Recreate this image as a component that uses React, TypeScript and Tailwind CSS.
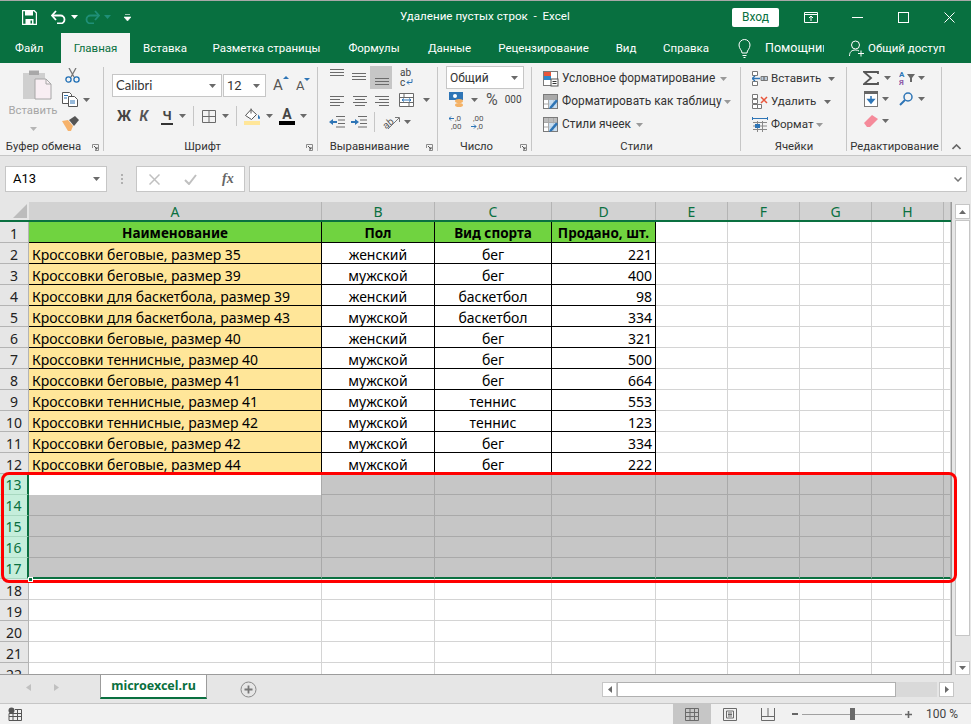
import type { ReactNode } from "react";

const rows = [
  ["Кроссовки беговые, размер 35", "женский", "бег", "221"],
  ["Кроссовки беговые, размер 39", "мужской", "бег", "400"],
  ["Кроссовки для баскетбола, размер 39", "женский", "баскетбол", "98"],
  ["Кроссовки для баскетбола, размер 43", "мужской", "баскетбол", "334"],
  ["Кроссовки беговые, размер 40", "женский", "бег", "321"],
  ["Кроссовки теннисные, размер 40", "мужской", "бег", "500"],
  ["Кроссовки беговые, размер 41", "мужской", "бег", "664"],
  ["Кроссовки теннисные, размер 41", "мужской", "теннис", "553"],
  ["Кроссовки теннисные, размер 42", "мужской", "теннис", "123"],
  ["Кроссовки беговые, размер 42", "мужской", "бег", "334"],
  ["Кроссовки беговые, размер 44", "мужской", "бег", "222"],
];

const columns = [
  { name: "A", width: "w-[293px]" },
  { name: "B", width: "w-[113px]" },
  { name: "C", width: "w-[117px]" },
  { name: "D", width: "w-[104px]" },
  { name: "E", width: "w-[72px]" },
  { name: "F", width: "w-[72px]" },
  { name: "G", width: "w-[72px]" },
  { name: "H", width: "w-[72px]" },
  { name: "", width: "w-[7px]" },
];

const tabs = [
  { name: "Вставка", width: "w-[70px]" },
  { name: "Разметка страницы", width: "w-[133px]" },
  { name: "Формулы", width: "w-[82px]" },
  { name: "Данные", width: "w-[69px]" },
  { name: "Рецензирование", width: "w-[119px]" },
  { name: "Вид", width: "w-[46px]" },
  { name: "Справка", width: "w-[74px]" },
];

const ui = { fontFamily: "Roboto, 'Noto Sans', sans-serif" };

function Chev({ color = "#6a6a6a" }: { color?: string }) {
  return (
    <svg width="7" height="4" viewBox="0 0 7 4" className="shrink-0">
      <path d="M0 0h7L3.5 4z" fill={color} />
    </svg>
  );
}

function Lines({ ys, xs, h = 13 }: { ys: number[]; xs: [number, number][]; h?: number }) {
  return (
    <svg width="15" height={h} viewBox={`0 0 15 ${h}`} className="shrink-0">
      {ys.map((y, i) => (
        <path key={y} d={`M${xs[i][0]} ${y + 0.5}H${xs[i][1]}`} stroke="#6b6b6b" />
      ))}
    </svg>
  );
}

function Launcher() {
  return (
    <svg width="7" height="7" viewBox="0 0 7 7" className="absolute right-[5px] top-[5px]">
      <path d="M.5 4V.5H6.5V6.5H3" fill="none" stroke="#8a8a8a" />
      <path d="M2 2l3 3M5 3v2H3" fill="none" stroke="#555" />
    </svg>
  );
}

function Group({ label, width, children, launcher }: { label: string; width: string; children: ReactNode; launcher?: boolean }) {
  return (
    <div className={`${width} relative flex h-[92px] shrink-0 flex-col`}>
      <div className="h-[76px] shrink-0">{children}</div>
      <div className={`relative h-[16px] whitespace-nowrap text-center text-[11.3px] leading-[16px] text-[#333] ${launcher ? "pr-[17px]" : ""}`}>
        {label}
        {launcher && <Launcher />}
      </div>
      <div className="absolute right-0 top-[4px] h-[84px] w-px bg-[#c6c6c6]" />
    </div>
  );
}

function SheetRow({ n, selected, children }: { n: number; selected?: boolean; children: ReactNode }) {
  return (
    <div className="flex h-[21px] shrink-0">
      <div
        className={
          selected
            ? "w-[29px] shrink-0 border-r-2 border-b border-r-[#0a7040] border-b-[#a8d8c0] bg-[#c5eedb] pt-[1px] text-center text-[14px] leading-[20px] text-[#0a7040]"
            : "w-[29px] shrink-0 border-r border-b border-[#b4b4b4] bg-[#e6e6e6] pt-[3px] text-center text-[14px] leading-[17px] text-[#222]"
        }
      >
        {n}
      </div>
      {children}
    </div>
  );
}

function StyleIcon({ kind }: { kind: number }) {
  return (
    <svg width="16" height="16" viewBox="0 0 16 16" className="shrink-0">
      <rect x=".5" y=".5" width="14" height="14" fill="#fff" stroke="#7a7a7a" />
      {kind === 0 ? (
        <>
          <rect x="1" y="1" width="7" height="4" fill="#e8553a" />
          <rect x="1" y="5" width="7" height="4" fill="#2e86c9" />
          <rect x="8" y="8" width="7" height="7" fill="#fff" stroke="#555" />
          <path d="M9.5 10.5h4M9.5 12.5h4" stroke="#333" />
        </>
      ) : (
        <>
          <rect x="1" y="1" width="13" height="4" fill={kind === 1 ? "#a9a9a9" : "#bcbcbc"} />
          <path d="M5.5 1v13M10.5 1v13M1 5.5h13M1 10h13" stroke="#a9a9a9" />
          <rect x="6" y="6" width="8" height="8" fill="#bdd7ee" opacity=".8" />
          <path d="M6 15l3-1 6-7-2-1.5-6 7z" fill="#2e75b6" />
        </>
      )}
    </svg>
  );
}

function Blank() {
  return (
    <>
      {["w-[72px]", "w-[72px]", "w-[72px]", "w-[72px]", "w-[7px]"].map((w, i) => (
        <div key={i} className={`${w} shrink-0 border-r border-b border-[#d4d4d4]`} />
      ))}
    </>
  );
}

export default function App() {
  const font = { fontFamily: "'Noto Sans', 'Open Sans', sans-serif" };

  return (
    <div className="flex h-[724px] w-[971px] flex-col overflow-hidden bg-[#e6e6e6]" style={font}>
      {/* title bar */}
      <div className="flex h-[33px] shrink-0 items-center border-t border-[#a8a8a8] bg-[#087040] pl-[22px] text-white" style={ui}>
        <svg width="15" height="15" viewBox="0 0 15 15" className="shrink-0">
          <path d="M.5.5h11.5l2.5 2.5v11.5H.5z" fill="none" stroke="#fff" strokeWidth="1.4" />
          <path d="M3 1h8v4.5H3zM3.5 9h8v5.5h-8z" fill="#fff" />
          <path d="M8.5 10.5h1.5v3H8.5z" fill="#087040" />
        </svg>
        <svg width="15" height="14" viewBox="0 0 15 14" className="ml-[14px] shrink-0">
          <path d="M1 5.5h8.5a4 4 0 0 1 0 8H6" fill="none" stroke="#fff" strokeWidth="1.8" />
          <path d="M5 1L1 5.5 5 10" fill="none" stroke="#fff" strokeWidth="1.8" />
        </svg>
        <span className="ml-[5px]"><Chev color="#fff" /></span>
        <svg width="15" height="14" viewBox="0 0 15 14" className="ml-[7px] shrink-0">
          <path d="M14 5.5H5.5a4 4 0 0 0 0 8H9" fill="none" stroke="#1f8f77" strokeWidth="1.8" />
          <path d="M10 1l4 4.5L10 10" fill="none" stroke="#1f8f77" strokeWidth="1.8" />
        </svg>
        <span className="ml-[4px]"><Chev color="#1f8f77" /></span>
        <svg width="7" height="7" viewBox="0 0 7 7" className="ml-[13px] shrink-0">
          <path d="M1 .5h5M0 3h7L3.5 7z" fill="#fff" stroke="#fff" strokeWidth=".6" />
        </svg>
        <span className="ml-[269px] w-[172px] whitespace-pre text-[11.6px]">Удаление пустых строк  -  Excel</span>
        <button className="ml-[160px] h-[19px] w-[47px] rounded-[2px] bg-white text-[12px] leading-[19px] text-[#087040]">Вход</button>
        <svg width="14" height="11" viewBox="0 0 14 11" className="ml-[25px] shrink-0">
          <path d="M.5.5h13v10H.5zM.5 2.5h13M7 9V4.5M5 6l2-2 2 2" fill="none" stroke="#fff" />
        </svg>
        <div className="ml-[34px] h-px w-[11px] shrink-0 bg-white" />
        <div className="ml-[35px] h-[11px] w-[11px] shrink-0 border border-white" />
        <svg width="11" height="11" viewBox="0 0 11 11" className="ml-[35px] shrink-0">
          <path d="M.5.5l10 10M10.5.5l-10 10" stroke="#fff" />
        </svg>
      </div>

      {/* tabs */}
      <div className="flex h-[30px] shrink-0 items-stretch bg-[#087040] text-[11.5px] leading-[30px] text-white" style={ui}>
        <span className="w-[61px] shrink-0 pl-[15px]">Файл</span>
        <span className="w-[69px] shrink-0 bg-[#f3f3f3] text-center text-[#087040]">Главная</span>
        {tabs.map((tab) => (
          <span key={tab.name} className={`${tab.width} shrink-0 whitespace-nowrap text-center`}>{tab.name}</span>
        ))}
        <svg width="13" height="20" viewBox="0 0 13 20" className="ml-[15px] mt-[6px] shrink-0">
          <path d="M4 14c0-3-3-4-3-8a5.5 5.5 0 0 1 11 0c0 4-3 5-3 8zM4.500 16.500h4M5.500 18.500h2" fill="none" stroke="#fff" />
        </svg>
        <span className="ml-[14px] w-[59px] shrink-0 overflow-hidden whitespace-nowrap text-[12.5px]">Помощник</span>
        <svg width="15" height="17" viewBox="0 0 15 17" className="ml-[25px] mt-[7px] shrink-0">
          <circle cx="6.5" cy="5" r="4" fill="none" stroke="#fff" />
          <path d="M.5 16c0-4 2-6 6-6 1.500 0 2.500.3 3.500 1M9 13.500h6M12 10.500v6" fill="none" stroke="#fff" />
        </svg>
        <span className="ml-[4px] whitespace-nowrap">Общий доступ</span>
      </div>

      {/* ribbon */}
      <div className="flex h-[93px] shrink-0 border-b border-[#c6c6c6] bg-[#f3f3f3] text-[#333]" style={ui}>
        <Group label="Буфер обмена" width="w-[104px]" launcher>
          <div className="flex">
            <div className="flex w-[62px] shrink-0 flex-col items-center pl-[4px] pt-[6px]">
              <svg width="29" height="31" viewBox="0 0 29 31" className="ml-[8px]">
                <path d="M0 4h6V1h10v3h6v26H0z" fill="#cfcfcf" />
                <rect x="6" y="2" width="10" height="4" fill="#a8a8a8" />
                <path d="M12 10h11l5 5v15H12z" fill="#f8eef3" stroke="#a6a6a6" />
                <path d="M23 10v5h5" fill="none" stroke="#a6a6a6" />
              </svg>
              <span className="mt-[3px] text-[11.3px] leading-[16px] text-[#a6a6a6]">Вставить</span>
              <span className="mt-[8px]"><Chev color="#b5b5b5" /></span>
            </div>
            <div className="flex flex-col gap-[9px] pt-[5px]">
              <svg width="15" height="15" viewBox="0 0 15 15" className="ml-[3px]">
                <path d="M4 0l5 9M11 0L6 9" stroke="#777" strokeWidth="1.3" />
                <circle cx="3.500" cy="11.500" r="2.600" fill="none" stroke="#1f6fb5" strokeWidth="1.300" />
                <circle cx="11.500" cy="11.500" r="2.600" fill="none" stroke="#1f6fb5" strokeWidth="1.300" />
              </svg>
              <div className="flex items-center gap-[5px]">
                <svg width="16" height="15" viewBox="0 0 16 15">
                  <path d="M.5.5h7l2 2v9H.5z" fill="#fff" stroke="#555" />
                  <path d="M6.500 4.500h6l3 3v7h-9z" fill="#fff" stroke="#555" />
                  <path d="M2 3.500h4M2 6h3M8 9h5M8 11h5" stroke="#2e75b6" />
                </svg>
                <Chev />
              </div>
              <svg width="17" height="15" viewBox="0 0 17 15">
                <path d="M0 5l6-1 5 6-2 5H6z" fill="#f6b26b" />
                <path d="M7 4l6-4 4 4-5 6z" fill="#555" />
              </svg>
            </div>
          </div>
        </Group>

        <Group label="Шрифт" width="w-[214px]" launcher>
          <div className="mt-[11px] flex h-[23px] items-center pl-[8px]">
            <div className="flex h-[23px] w-[110px] items-center justify-between border border-[#c6c6c6] bg-white pl-[3px] pr-[5px] text-[13px]" style={{ fontFamily: "Lato, 'Noto Sans', sans-serif" }}>
              Calibri <Chev />
            </div>
            <div className="ml-px flex h-[23px] w-[43px] items-center justify-between border border-[#c6c6c6] bg-white pl-[3px] pr-[5px] text-[13px]">
              12 <Chev />
            </div>
            <span className="relative ml-[7px] w-[20px] text-[15px] text-[#555]">A<span className="absolute left-[10px] top-[2px]"><svg width="6" height="3"><path d="M0 3l3-3 3 3z" fill="#2e75b6" /></svg></span></span>
            <span className="relative ml-[3px] w-[20px] text-[13px] text-[#555]">A<span className="absolute left-[8px] top-[2px]"><svg width="6" height="3"><path d="M0 0l3 3 3-3z" fill="#2e75b6" /></svg></span></span>
          </div>
          <div className="mt-[7px] flex h-[24px] items-center pl-[13px] text-[14px] font-bold text-[#444]">
            <span className="w-[14px] text-center leading-none">Ж</span>
            <span className="ml-[7px] w-[12px] text-center italic leading-none text-[#555]">К</span>
            <span className="ml-[11px] w-[12px] border-b-2 border-[#333] text-center text-[13px] leading-[15px]">Ч</span>
            <span className="ml-[6px]"><Chev /></span>
            <div className="ml-[7px] h-[20px] w-px bg-[#c6c6c6]" />
            <svg width="14" height="13" viewBox="0 0 14 13" className="ml-[8px]">
              <path d="M.5.5h13v12H.5zM7 .5v12M.5 6.500h13" fill="none" stroke="#6a6a6a" />
            </svg>
            <span className="ml-[6px]"><Chev /></span>
            <div className="ml-[7px] h-[20px] w-px bg-[#c6c6c6]" />
            <svg width="17" height="17" viewBox="0 0 17 17" className="ml-[7px]">
              <path d="M1.500 7.500L7 1.500l5.500 5-5 5z" fill="#fff" stroke="#555" />
              <path d="M7 .5v5" stroke="#555" />
              <path d="M14 6.500c1.200 1.300 2 2.500 2 3.500a1 1 0 0 1-2 0z" fill="#2e75b6" />
              <rect x="0" y="13" width="16" height="4" fill="#ffe699" />
            </svg>
            <span className="ml-[5px]"><Chev /></span>
            <div className="ml-[6px] flex w-[16px] flex-col items-center">
              <span className="text-[14px] leading-[13px] text-[#444]">A</span>
              <span className="h-[4px] w-[16px] bg-black" />
            </div>
            <span className="ml-[5px]"><Chev /></span>
          </div>
        </Group>

        <Group label="Выравнивание" width="w-[120px]" launcher>
          <div className="mt-[3px] flex h-[23px] items-center pl-[12px]">
            <Lines h={17} ys={[0, 3, 6]} xs={[[0, 14], [0, 14], [0, 14]]} />
            <span className="ml-[7px]"><Lines h={17} ys={[4, 7, 10]} xs={[[0, 14], [0, 14], [0, 14]]} /></span>
            <span className="ml-[3px] flex h-[23px] w-[22px] items-center justify-center bg-[#c6c6c6]"><Lines h={17} ys={[9, 12, 15]} xs={[[1, 15], [1, 15], [1, 15]]} /></span>
            <svg width="16" height="20" viewBox="0 0 16 20" className="ml-[7px] shrink-0">
              <text x="1" y="8" fontSize="10" fill="#444" fontFamily="Roboto, sans-serif">ab</text>
              <text x="1" y="18" fontSize="10" fill="#444" fontFamily="Roboto, sans-serif">c</text>
              <path d="M13 11v3.500H8M10 12.500l-2 2 2 2" fill="none" stroke="#2e75b6" />
            </svg>
          </div>
          <div className="flex h-[22px] items-center pl-[12px]">
            <Lines ys={[2, 5, 8, 11]} xs={[[0, 14], [0, 10], [0, 14], [0, 10]]} />
            <span className="ml-[7px]"><Lines ys={[2, 5, 8, 11]} xs={[[1, 15], [3, 13], [1, 15], [3, 13]]} /></span>
            <span className="ml-[7px]"><Lines ys={[2, 5, 8, 11]} xs={[[1, 15], [5, 15], [1, 15], [5, 15]]} /></span>
            <svg width="15" height="14" viewBox="0 0 15 14" className="ml-[10px]">
              <path d="M.5.5h14v13H.5zM.5 4.500h14M.5 9.500h14M5 .5v4M10 9.500v4" fill="#fff" stroke="#6a6a6a" />
              <path d="M3 7h9M3 7l2-1.500M3 7l2 1.500M12 7l-2-1.500M12 7l-2 1.500" stroke="#2e75b6" />
            </svg>
            <span className="ml-[9px]"><Chev /></span>
          </div>
          <div className="flex h-[22px] items-center pl-[11px]">
            <svg width="16" height="12" viewBox="0 0 16 12">
              <path d="M7 .5h9M9 4h7M9 7.500h7M7 11h9" stroke="#6b6b6b" />
              <path d="M0 6l4-3v2h4v2H4v2z" fill="#2e75b6" />
            </svg>
            <svg width="16" height="12" viewBox="0 0 16 12" className="ml-[6px]">
              <path d="M7 .5h9M9 4h7M9 7.500h7M7 11h9" stroke="#6b6b6b" />
              <path d="M8 6L4 3v2H0v2h4v2z" fill="#2e75b6" />
            </svg>
            <div className="ml-[7px] h-[20px] w-px bg-[#c6c6c6]" />
            <svg width="18" height="16" viewBox="0 0 18 16" className="ml-[7px]">
              <text x="1" y="13" fontSize="10" fill="#555" transform="rotate(-40 6 10)">ab</text>
              <path d="M6 15L17 4M13 3.500h4.500V8" fill="none" stroke="#777" />
            </svg>
            <span className="ml-[4px]"><Chev /></span>
          </div>
        </Group>

        <Group label="Число" width="w-[94px]" launcher>
          <div className="ml-[8px] mt-[3px] flex h-[23px] w-[78px] items-center justify-between border border-[#c6c6c6] bg-white pl-[3px] pr-[5px] text-[12px]">
            Общий <Chev />
          </div>
          <div className="flex h-[22px] items-center pl-[11px]">
            <svg width="15" height="16" viewBox="0 0 15 16">
              <rect x="0" y="0" width="14" height="8" fill="#2e75b6" />
              <circle cx="6" cy="4" r="2" fill="#fff" />
              <ellipse cx="10" cy="9" rx="4" ry="2" fill="#f4b266" />
              <ellipse cx="10" cy="13" rx="4" ry="2" fill="#f4b266" />
            </svg>
            <span className="ml-[7px]"><Chev /></span>
            <span className="ml-[8px] text-[16px] leading-none text-[#555]">%</span>
            <span className="ml-[7px] text-[10px] leading-none text-[#444]">000</span>
          </div>
          <div className="flex h-[22px] items-center pl-[11px]">
            <svg width="16" height="15" viewBox="0 0 16 15">
              <path d="M0 3.500h5M0 3.500l2-2M0 3.500l2 2" fill="none" stroke="#2e75b6" />
              <text x="6" y="6" fontSize="8" fill="#555" fontFamily="Roboto, sans-serif">,0</text>
              <text x="2" y="14" fontSize="8" fill="#555" fontFamily="Roboto, sans-serif">,00</text>
            </svg>
            <svg width="16" height="15" viewBox="0 0 16 15" className="ml-[6px]">
              <text x="2" y="6" fontSize="8" fill="#555" fontFamily="Roboto, sans-serif">,00</text>
              <path d="M0 11.500h5M5 11.500l-2-2M5 11.500l-2 2" fill="none" stroke="#2e75b6" />
              <text x="6" y="14" fontSize="8" fill="#555" fontFamily="Roboto, sans-serif">,0</text>
            </svg>
          </div>
        </Group>

        <Group label="Стили" width="w-[209px]">
          <div className="flex flex-col pl-[11px] pt-[4px] text-[11.9px]">
            <div className="flex h-[23px] items-center gap-[3px] whitespace-nowrap"><StyleIcon kind={0} /><span className="w-[155px]">Условное форматирование</span><Chev color="#999" /></div>
            <div className="flex h-[23px] items-center gap-[3px] whitespace-nowrap"><StyleIcon kind={1} /><span className="w-[159px]">Форматировать как таблицу</span><Chev color="#999" /></div>
            <div className="flex h-[23px] items-center gap-[3px] whitespace-nowrap"><StyleIcon kind={2} /><span className="w-[71px]">Стили ячеек</span><Chev color="#999" /></div>
          </div>
        </Group>

        <Group label="Ячейки" width="w-[106px]">
          <div className="flex flex-col pl-[11px] pt-[4px] text-[11.6px]">
            <div className="flex h-[23px] items-center whitespace-nowrap">
              <svg width="16" height="15" viewBox="0 0 16 15" className="shrink-0">
                <path d="M.5.5h5v4h-5zM.5 10.500h5v4h-5z" fill="#fff" stroke="#777" />
                <path d="M9 5.500h3v4H9zM12 5.500h3.500v4H12z" fill="#bcd" stroke="#777" />
                <path d="M0 7.500h8M0 7.500l3-2.500M0 7.500l3 2.500" stroke="#2e75b6" strokeWidth="1.300" />
              </svg>
              <span className="ml-[3px] w-[57px]">Вставить</span><Chev />
            </div>
            <div className="flex h-[23px] items-center whitespace-nowrap">
              <svg width="16" height="15" viewBox="0 0 16 15" className="shrink-0">
                <path d="M.5.5h5v4h-5zM.5 5.500h5v4h-5zM.5 10.500h5v4h-5zM5.500 10.500h4v4h-4z" fill="#fff" stroke="#777" />
                <path d="M9 3l6 6M15 3L9 9" stroke="#e8553a" strokeWidth="1.500" />
              </svg>
              <span className="ml-[3px] w-[53px]">Удалить</span><Chev />
            </div>
            <div className="flex h-[23px] items-center whitespace-nowrap">
              <svg width="16" height="16" viewBox="0 0 16 16" className="shrink-0">
                <path d="M.5 1.500h15M.5 0v3M15.500 0v3" stroke="#2e75b6" />
                <path d="M1 5.500h14M1 9h14M1 12.500h14M5.500 4v11M10.500 4v11" stroke="#888" />
                <rect x="3" y="7" width="5" height="4" fill="#2e75b6" />
              </svg>
              <span className="ml-[3px] w-[45px]">Формат</span><Chev color="#999" />
            </div>
          </div>
        </Group>

        <Group label="Редактирование" width="w-[95px]">
          <div className="flex h-[24px] items-center pl-[16px] pt-[5px]">
            <svg width="16" height="14" viewBox="0 0 16 14"><path d="M15 3V1H1l7 6-7 6h14v-2" fill="none" stroke="#555" strokeWidth="1.800" /></svg>
            <span className="ml-[5px]"><Chev /></span>
            <svg width="14" height="16" viewBox="0 0 14 16" className="ml-[8px] shrink-0">
              <text x="0" y="7" fontSize="8" fontWeight="700" fill="#2e75b6" fontFamily="Roboto, sans-serif">А</text>
              <text x="0" y="15" fontSize="8" fontWeight="700" fill="#8e5ba8" fontFamily="Roboto, sans-serif">Я</text>
            </svg>
            <svg width="8" height="8" viewBox="0 0 8 8" className="-ml-[6px]"><path d="M0 0h8L5 4v4H3V4z" fill="#666" /></svg>
            <span className="ml-[3px]"><Chev /></span>
          </div>
          <div className="flex h-[23px] items-center pl-[17px]">
            <svg width="14" height="16" viewBox="0 0 14 16">
              <rect x=".5" y=".5" width="13" height="15" fill="#fff" stroke="#777" />
              <rect x="0" y="0" width="14" height="3" fill="#666" />
              <path d="M7 5v6M4 8.500l3 3.500 3-3.500z" stroke="#2e75b6" fill="#2e75b6" strokeWidth="1.500" />
            </svg>
            <span className="ml-[4px]"><Chev /></span>
            <svg width="14" height="14" viewBox="0 0 14 14" className="ml-[10px]">
              <circle cx="9" cy="5" r="4" fill="none" stroke="#2e75b6" strokeWidth="1.500" />
              <path d="M6 8l-5 5" stroke="#2e75b6" strokeWidth="2" />
            </svg>
            <span className="ml-[5px]"><Chev /></span>
          </div>
          <div className="flex h-[22px] items-center pl-[17px]">
            <svg width="14" height="12" viewBox="0 0 14 12"><path d="M0 8l8-8 6 4-8 8H3z" fill="#f58a9a" /></svg>
            <span className="ml-[4px]"><Chev /></span>
          </div>
        </Group>

        <div className="flex flex-1 items-end justify-center pb-[5px]">
          <svg width="9" height="6" viewBox="0 0 9 6"><path d="M.5 5l4-4 4 4" fill="none" stroke="#666" strokeWidth="1.600" /></svg>
        </div>
      </div>

      {/* formula bar */}
      <div className="flex h-[46px] shrink-0 items-center pl-[5px]">
        <div className="flex h-[26px] w-[102px] items-center justify-between border border-[#c6c6c6] bg-white pl-[7px] pr-[6px] text-[13px]" style={ui}>
          A13 <Chev />
        </div>
        <div className="ml-[14px] flex flex-col gap-[2px]">
          <span className="h-[2px] w-[2px] bg-[#b0b0b0]" />
          <span className="h-[2px] w-[2px] bg-[#b0b0b0]" />
          <span className="h-[2px] w-[2px] bg-[#b0b0b0]" />
        </div>
        <div className="ml-[13px] flex h-[26px] w-[109px] items-center border border-[#c6c6c6] bg-white pl-[12px]">
          <svg width="11" height="11" viewBox="0 0 11 11"><path d="M.5.5l10 10M10.500.5l-10 10" stroke="#c0c0c0" strokeWidth="1.500" /></svg>
          <svg width="13" height="11" viewBox="0 0 13 11" className="ml-[24px]"><path d="M1 6l4 4 7-9" fill="none" stroke="#c0c0c0" strokeWidth="2" /></svg>
          <span className="ml-[25px] text-[14px] font-bold italic leading-none text-[#666]" style={{ fontFamily: "'Liberation Serif', serif" }}>fx</span>
        </div>
        <div className="ml-[4px] flex h-[26px] w-[718px] items-center justify-end border border-[#c6c6c6] bg-white pr-[4px]">
          <svg width="8" height="5" viewBox="0 0 8 5"><path d="M.5.5L4 4 7.500.5" fill="none" stroke="#777" strokeWidth="1.500" /></svg>
        </div>
      </div>

      {/* sheet and vertical scrollbar */}
      <div className="relative flex h-[473px] shrink-0">
        <div className="flex w-[952px] shrink-0 flex-col overflow-hidden border-r border-b border-[#9c9c9c] bg-white text-[14px] text-black">
          <div className="flex h-[20px] shrink-0 border-b-2 border-[#0a7040]">
            <div className="flex w-[29px] shrink-0 items-end justify-end bg-[#e6e6e6] p-[2px]">
              <svg width="14" height="14" viewBox="0 0 14 14"><path d="M14 0v14H0z" fill="#bcbcbc" /></svg>
            </div>
            {columns.map((col, i) => (
              <div key={i} className={`${col.width} shrink-0 border-r border-[#b4b4b4] bg-[#d2d2d2] text-center leading-[19px] text-[#0a7040]`}>
                {col.name}
              </div>
            ))}
          </div>

          <SheetRow n={1}>
            <div className="w-[293px] shrink-0 border-r border-b border-black bg-[#70d340] pt-[2px] text-center text-[13.5px] font-bold leading-[18px]">Наименование</div>
            <div className="w-[113px] shrink-0 border-r border-b border-black bg-[#70d340] pt-[2px] text-center text-[13.5px] font-bold leading-[18px]">Пол</div>
            <div className="w-[117px] shrink-0 border-r border-b border-black bg-[#70d340] pt-[2px] text-center text-[13.5px] font-bold leading-[18px]">Вид спорта</div>
            <div className="w-[104px] shrink-0 whitespace-nowrap border-r border-b border-black bg-[#70d340] pt-[2px] text-center text-[13.5px] font-bold leading-[18px]">Продано, шт.</div>
            <Blank />
          </SheetRow>

          {rows.map((row, i) => (
            <SheetRow key={i} n={i + 2}>
              <div className="w-[293px] shrink-0 whitespace-nowrap border-r border-b border-black bg-[#ffe699] pl-[3px] pt-[3px] leading-[17px]">{row[0]}</div>
              <div className="w-[113px] shrink-0 border-r border-b border-black pt-[3px] text-center leading-[17px]">{row[1]}</div>
              <div className="w-[117px] shrink-0 border-r border-b border-black pt-[3px] text-center leading-[17px]">{row[2]}</div>
              <div className="w-[104px] shrink-0 border-r border-b border-black pr-[3px] pt-[3px] text-right leading-[17px]">{row[3]}</div>
              <Blank />
            </SheetRow>
          ))}

          {[13, 14, 15, 16, 17].map((n) => (
            <SheetRow key={n} n={n} selected>
              {columns.map((col, i) => (
                <div
                  key={i}
                  className={
                    n === 13 && i === 0
                      ? "w-[293px] shrink-0 border-r border-[#a9a9a9] bg-white"
                      : n === 17
                        ? `${col.width} shrink-0 border-r border-b-2 border-r-[#a9a9a9] border-b-[#0a7040] bg-[#c6c6c6]`
                        : `${col.width} shrink-0 border-r border-b border-[#a9a9a9] bg-[#c6c6c6]`
                  }
                />
              ))}
            </SheetRow>
          ))}

          {[18, 19, 20, 21, 22].map((n) => (
            <SheetRow key={n} n={n}>
              {columns.map((col, i) => (
                <div key={i} className={`${col.width} shrink-0 border-r border-b border-[#d4d4d4]`} />
              ))}
            </SheetRow>
          ))}
        </div>

        <div className="ml-[3px] flex w-[15px] shrink-0 flex-col pt-[2px]">
          <div className="flex h-[15px] items-center justify-center border border-[#c6c6c6] bg-white">
            <svg width="7" height="4" viewBox="0 0 7 4"><path d="M0 4h7L3.500 0z" fill="#6a6a6a" /></svg>
          </div>
          <div className="mt-px h-[416px] border border-[#c6c6c6] bg-white" />
          <div className="flex-1" />
          <div className="flex h-[14px] items-center justify-center border border-[#c6c6c6] bg-white">
            <Chev />
          </div>
        </div>

        {/* red highlight drawn over the selected rows */}
        <div className="pointer-events-none absolute left-px top-[270px] h-[111px] w-[956px] rounded-[8px] border-[3px] border-[#ff0000]" />
        {/* fill handle */}
        <div className="absolute left-[28px] top-[375px] h-[5px] w-[5px] border border-white bg-[#0a7040]" />
      </div>

      {/* sheet tabs */}
      <div className="flex h-[28px] shrink-0">
        <div className="flex w-[100px] shrink-0 pl-[26px] pt-[9px]">
          <svg width="5" height="7" viewBox="0 0 5 7"><path d="M5 0v7L0 3.500z" fill="#c0c0c0" /></svg>
          <svg width="5" height="7" viewBox="0 0 5 7" className="ml-[23px]"><path d="M0 0v7l5-3.500z" fill="#c0c0c0" /></svg>
        </div>
        <div className="h-[24px] w-[107px] shrink-0 border-x border-b-2 border-x-[#9c9c9c] border-b-[#0a7040] bg-white text-center text-[12.5px] font-bold leading-[22px] text-[#0a7040]">
          microexcel.ru
        </div>
        <svg width="17" height="17" viewBox="0 0 17 17" className="ml-[33px] mt-[6px] shrink-0">
          <circle cx="8.500" cy="8.500" r="7.500" fill="none" stroke="#8a8a8a" />
          <path d="M4.500 8.500h8M8.500 4.500v8" stroke="#777" strokeWidth="1.800" />
        </svg>
        <div className="ml-[345px] mt-[7px] flex h-[15px] w-[352px] shrink-0">
          <div className="flex w-[15px] items-center justify-center border border-[#c6c6c6] bg-white">
            <svg width="4" height="7" viewBox="0 0 4 7"><path d="M4 0v7L0 3.500z" fill="#6a6a6a" /></svg>
          </div>
          <div className="w-[279px] border border-[#b0b0b0] bg-white" />
          <div className="w-[41px] bg-[#d9d9d9]" />
          <div className="ml-[2px] flex w-[15px] items-center justify-center border border-[#c6c6c6] bg-white">
            <svg width="4" height="7" viewBox="0 0 4 7"><path d="M0 0v7l4-3.500z" fill="#6a6a6a" /></svg>
          </div>
        </div>
      </div>

      {/* status bar */}
      <div className="flex h-[21px] shrink-0 items-stretch border-t border-[#c6c6c6] bg-[#f1f1f1]" style={ui}>
        <svg width="14" height="14" viewBox="0 0 14 14" className="ml-[8px] mt-[3px] shrink-0">
          <circle cx="3.500" cy="3.500" r="3" fill="#555" />
          <path d="M7 2.500h6.500v11H1v-7h12.500M1 9.500h12.500M5 6.500v7M9.500 2.500v11" fill="none" stroke="#555" />
        </svg>
        <div className="ml-[651px] flex w-[38px] shrink-0 items-center justify-center bg-[#c6c6c6]">
          <svg width="14" height="13" viewBox="0 0 14 13"><path d="M.5.5h13v12H.5zM.5 4.500h13M.5 8.500h13M5 .5v12M9.500.5v12" fill="none" stroke="#6a6a6a" /></svg>
        </div>
        <div className="ml-[12px] flex items-center">
          <svg width="14" height="13" viewBox="0 0 14 13"><path d="M.5.5h13v12H.5zM3.500 3h7v7h-7zM5 5h4M5 6.500h4M5 8h4" fill="none" stroke="#6a6a6a" /></svg>
        </div>
        <div className="ml-[24px] flex items-center">
          <svg width="14" height="13" viewBox="0 0 14 13"><path d="M.5 0v12.500h13V0M.5 8.500h13M7 0v8.500" fill="none" stroke="#6a6a6a" /></svg>
        </div>
        <div className="ml-[17px] flex items-center">
          <div className="h-[2px] w-[6px] bg-[#666]" />
          <div className="relative ml-[4px] flex h-[12px] w-[100px] items-center">
            <div className="h-px w-full bg-[#a0a0a0]" />
            <div className="absolute left-[48px] top-0 h-[12px] w-[5px] bg-[#6a6a6a]" />
          </div>
          <svg width="7" height="7" viewBox="0 0 7 7" className="ml-[3px]"><path d="M0 3.500h7M3.500 0v7" stroke="#666" strokeWidth="1.600" /></svg>
          <span className="ml-[14px] whitespace-nowrap text-[12px] text-[#444]">100 %</span>
        </div>
      </div>
    </div>
  );
}
